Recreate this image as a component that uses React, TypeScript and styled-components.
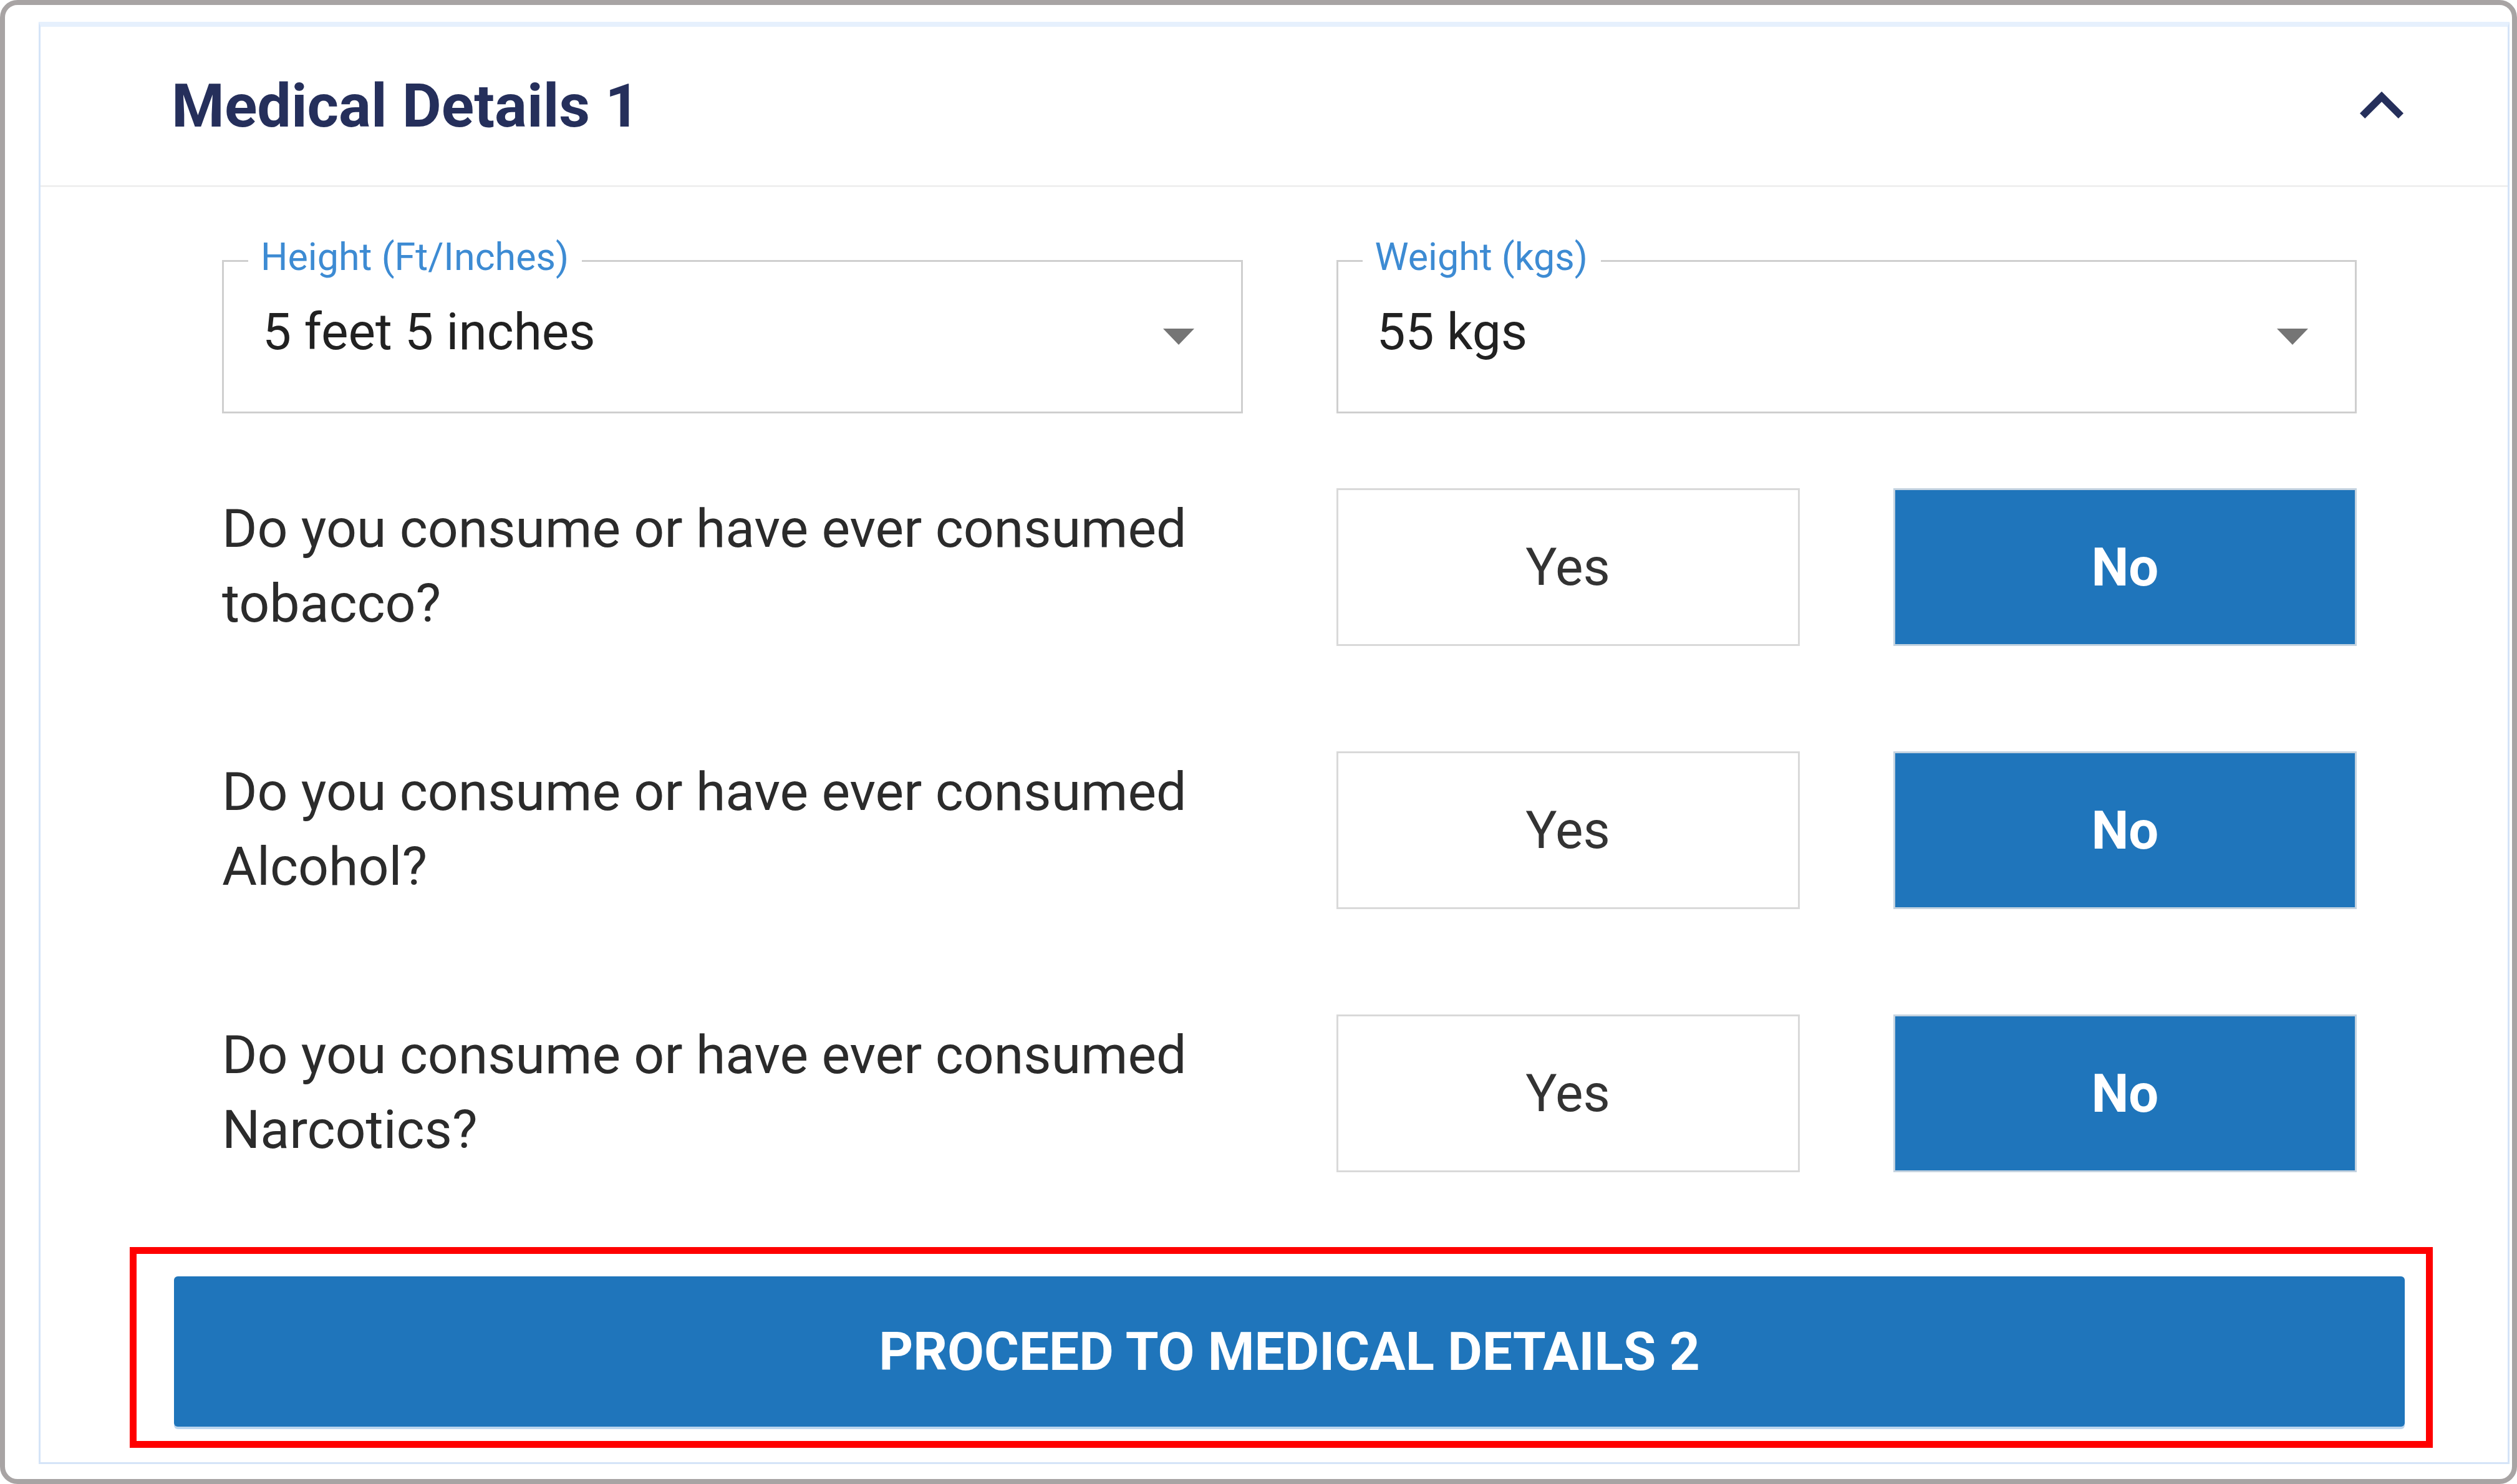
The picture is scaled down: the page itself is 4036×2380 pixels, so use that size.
import styled, { createGlobalStyle } from 'styled-components'

const GlobalStyle = createGlobalStyle`
  * {
    box-sizing: border-box;
  }
  html,
  body {
    margin: 0;
    padding: 0;
    background: #ffffff;
  }
  body {
    font-family: Roboto, 'Liberation Sans', Arial, sans-serif;
  }
`

const Frame = styled.div`
  display: flex;
  width: 4036px;
  height: 2380px;
  padding: 27px 4px 24px 54px;
  border: 8px solid #a8a4a4;
  border-radius: 28px;
  background: #ffffff;
`

const Card = styled.section`
  flex: 1;
  display: flex;
  flex-direction: column;
  border: 3px solid #d5e4f8;
  border-top: 8px solid #e6f0fd;
  background: #ffffff;
`

const Header = styled.header`
  display: flex;
  align-items: center;
  justify-content: space-between;
  height: 257px;
  padding: 0 132px 0 210px;
  border-bottom: 3px solid #efefef;
`

const Title = styled.h2`
  margin: 0;
  font-size: 97px;
  font-weight: 700;
  color: #252f5b;
`

const Body = styled.div`
  display: flex;
  flex-direction: column;
  padding-top: 82px;
`

const Form = styled.div`
  display: flex;
  flex-direction: column;
  padding: 0 242px 0 291px;
`

const TwoColumns = styled.div`
  display: grid;
  grid-template-columns: 1fr 1fr;
  column-gap: 150px;
  align-items: start;
`

const Field = styled.fieldset`
  margin: 0;
  padding: 0;
  min-width: 0;
  border: 3px solid #cfcfcf;
`

const Legend = styled.legend`
  margin-left: 39px;
  padding: 0 21px 11px 20px;
  font-size: 61px;
  line-height: 61px;
  color: #3d8bd3;
`

const SelectRow = styled.div`
  display: flex;
  align-items: flex-start;
  justify-content: space-between;
  height: 206px;
  padding: 37px 75px 0 62px;
`

const SelectValue = styled.span`
  font-size: 82px;
  line-height: 82px;
  color: #212121;
`

const Arrow = styled.svg`
  margin-top: 36px;
  flex-shrink: 0;
`

const Questions = styled.div`
  display: flex;
  flex-direction: column;
  gap: 169px;
  margin-top: 120px;
`

const QuestionText = styled.p`
  margin: 0;
  padding-top: 5px;
  font-size: 86px;
  line-height: 120px;
  color: #2b2b2b;
`

const Choices = styled.div`
  display: grid;
  grid-template-columns: 1fr 1fr;
  column-gap: 150px;
`

const Choice = styled.button<{ $selected?: boolean }>`
  height: 253px;
  margin: 0;
  padding: 0;
  border: 3px solid ${(p) => (p.$selected ? '#c4d3e0' : '#d9d9d9')};
  border-radius: 0;
  background: ${(p) => (p.$selected ? '#1f75bb' : '#ffffff')};
  color: ${(p) => (p.$selected ? '#ffffff' : '#333333')};
  font-family: Roboto, 'Liberation Sans', Arial, sans-serif;
  font-size: ${(p) => (p.$selected ? '85px' : '84px')};
  font-weight: ${(p) => (p.$selected ? 700 : 400)};
`

const Highlight = styled.div`
  margin: 120px 120px 23px 143px;
  padding: 36px 34px 23px 60px;
  border: 11px solid #ff0000;
`

const ProceedButton = styled.button`
  display: block;
  width: 100%;
  height: 241px;
  margin: 0;
  border: none;
  border-radius: 6px;
  background: #1f75bb;
  box-shadow: 0 4px 0 #bcd6ef;
  color: #ffffff;
  font-family: Roboto, 'Liberation Sans', Arial, sans-serif;
  font-size: 85.5px;
  font-weight: 700;
  text-transform: uppercase;
`

const ChevronUp = () => (
  <svg width="140" height="140" viewBox="0 0 24 24">
    <path
      d="M12 8l-6 6 1.41 1.41L12 10.83l4.59 4.58L18 14z"
      fill="#252f5b"
    />
  </svg>
)

const DropArrow = () => (
  <Arrow width="50" height="26" viewBox="0 0 50 26">
    <polygon points="0,0 50,0 25,26" fill="#757575" />
  </Arrow>
)

const selects = [
  { label: 'Height (Ft/Inches)', value: '5 feet 5 inches' },
  { label: 'Weight (kgs)', value: '55 kgs' },
]

const questions = [
  'Do you consume or have ever consumed tobacco?',
  'Do you consume or have ever consumed Alcohol?',
  'Do you consume or have ever consumed Narcotics?',
]

function App() {
  return (
    <>
      <GlobalStyle />
      <Frame>
        <Card>
          <Header>
            <Title>Medical Details 1</Title>
            <ChevronUp />
          </Header>
          <Body>
            <Form>
              <TwoColumns>
                {selects.map((s) => (
                  <Field key={s.label}>
                    <Legend>{s.label}</Legend>
                    <SelectRow>
                      <SelectValue>{s.value}</SelectValue>
                      <DropArrow />
                    </SelectRow>
                  </Field>
                ))}
              </TwoColumns>
              <Questions>
                {questions.map((q) => (
                  <TwoColumns key={q}>
                    <QuestionText>{q}</QuestionText>
                    <Choices>
                      <Choice>Yes</Choice>
                      <Choice $selected>No</Choice>
                    </Choices>
                  </TwoColumns>
                ))}
              </Questions>
            </Form>
            <Highlight>
              <ProceedButton>Proceed to Medical Details 2</ProceedButton>
            </Highlight>
          </Body>
        </Card>
      </Frame>
    </>
  )
}

export default App
